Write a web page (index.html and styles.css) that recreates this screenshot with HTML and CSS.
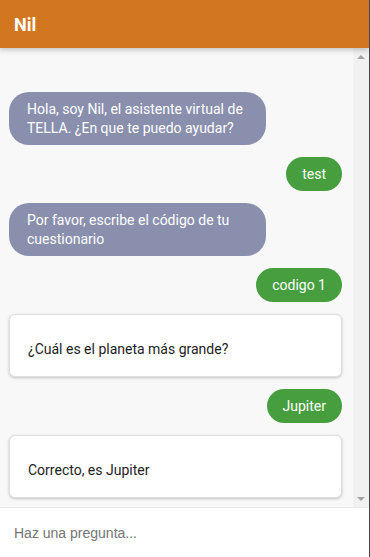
FILE: index.html
```html
<!DOCTYPE html>
<html lang="es">
<head>
<meta charset="utf-8">
<title>Nil</title>
<link rel="stylesheet" href="styles.css">
</head>
<body>
<div class="app">
  <header class="topbar"><span class="title">Nil</span></header>
  <main class="chat">
    <div class="messages">
      <div class="msg bot">Hola, soy Nil, el asistente virtual de TELLA. ¿En que te puedo ayudar?</div>
      <div class="msg user">test</div>
      <div class="msg bot">Por favor, escribe el código de tu cuestionario</div>
      <div class="msg user">codigo 1</div>
      <div class="card">¿Cuál es el planeta más grande?</div>
      <div class="msg user">Jupiter</div>
      <div class="card">Correcto, es Jupiter</div>
    </div>
    <div class="scrollbar">
      <span class="arrow up"></span>
      <span class="arrow down"></span>
    </div>
  </main>
  <footer class="composer">
    <input class="ask" type="text" placeholder="Haz una pregunta...">
  </footer>
</div>
</body>
</html>
```
FILE: styles.css
```css
* { box-sizing: border-box; }
html, body { margin: 0; padding: 0; }
body {
  font-family: Roboto, "Noto Sans", "Liberation Sans", sans-serif;
  background: #ffffff;
}
.app {
  width: 370px;
  height: 557px;
  display: flex;
  flex-direction: column;
  border-right: 1px solid #45474a;
  overflow: hidden;
}
.topbar {
  height: 48px;
  flex: 0 0 48px;
  background: #d2761f;
  display: flex;
  align-items: center;
  padding-left: 14px;
  box-shadow: 0 2px 5px rgba(0,0,0,0.22);
  position: relative;
  z-index: 2;
}
.title {
  color: #ffffff;
  font-size: 18px;
  font-weight: 700;
  letter-spacing: 0;
}
.chat {
  flex: 1 1 auto;
  display: flex;
  background: #f8f8f8;
  min-height: 0;
}
.messages {
  flex: 1 1 auto;
  display: flex;
  flex-direction: column;
  gap: 12px;
  padding: 44px 11px 9px 9px;
}
.msg {
  font-size: 14px;
  line-height: 19px;
  color: #ffffff;
}
.bot {
  align-self: flex-start;
  width: 257px;
  background: #8a8fae;
  border-radius: 20px;
  padding: 8px 18px 7px 18px;
}
.user {
  align-self: flex-end;
  background: #479e3e;
  border-radius: 17px;
  padding: 8px 16px 7px 16px;
}
.card {
  background: #ffffff;
  border: 1px solid #dedede;
  border-radius: 6px;
  box-shadow: 0 1px 3px rgba(0,0,0,0.22);
  font-size: 14px;
  line-height: 19px;
  color: #1d1d1d;
  padding: 25px 18px 17px 18px;
}
.scrollbar {
  flex: 0 0 16px;
  width: 16px;
  background: #f1f1f1;
  display: flex;
  flex-direction: column;
  justify-content: space-between;
  align-items: center;
  padding: 7px 0 6px 0;
}
.arrow {
  width: 0;
  height: 0;
  border-left: 4px solid transparent;
  border-right: 4px solid transparent;
}
.arrow.up { border-bottom: 4px solid #a3a3a3; }
.arrow.down { border-top: 4px solid #a3a3a3; }
.composer {
  flex: 0 0 50px;
  height: 50px;
  background: #ffffff;
  border-top: 1px solid #e8e8e8;
  display: flex;
  align-items: center;
}
.ask {
  border: none;
  outline: none;
  background: transparent;
  width: 100%;
  height: 100%;
  padding: 0 14px;
  font-family: "Liberation Sans", Arial, sans-serif;
  font-size: 14px;
  color: #333333;
}
.ask::placeholder { color: #757575; }
```
